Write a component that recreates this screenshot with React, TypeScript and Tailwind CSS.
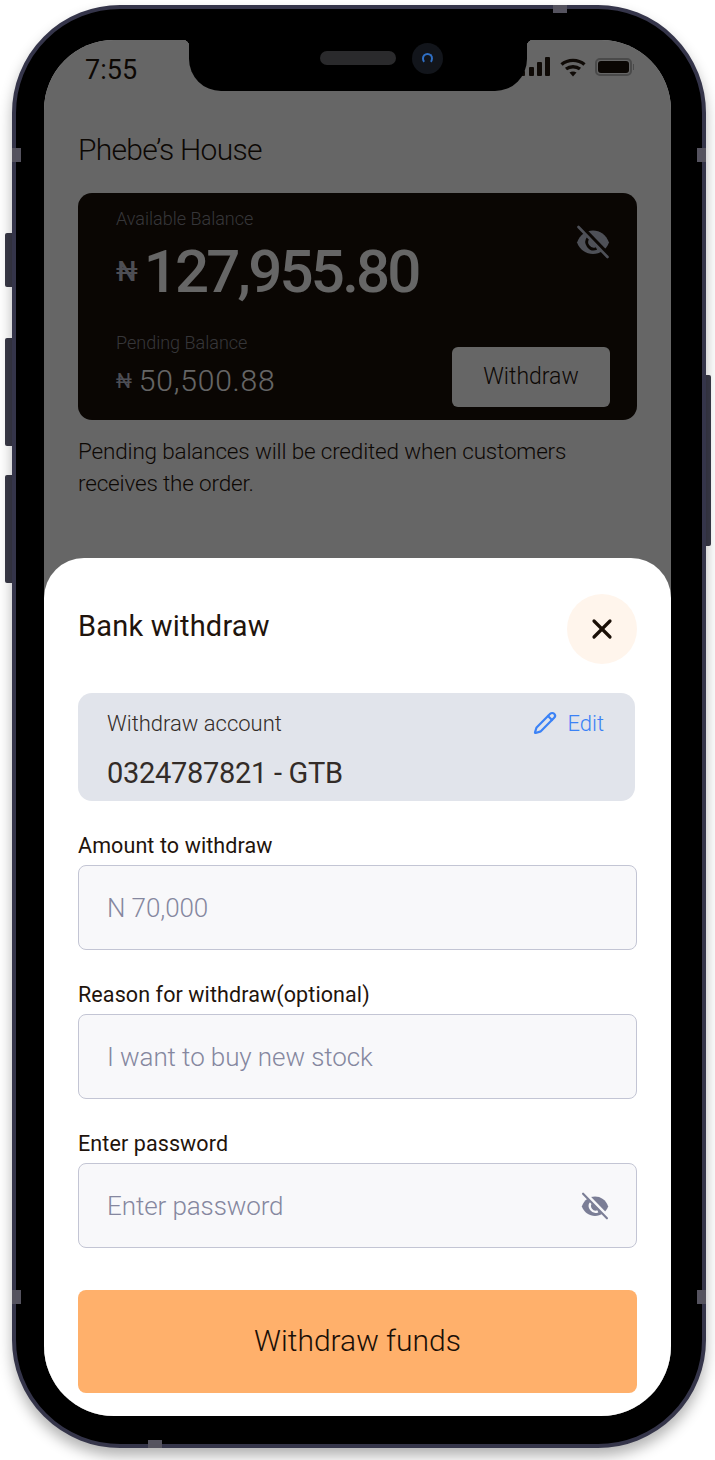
import { Pencil, X } from "lucide-react";

const EyeOff = ({ className = "", cut }: { className?: string; cut: string }) => (
  <svg viewBox="0 0 34 34" className={className} fill="none">
    <path d="M1 17.500C4 9.500 10 5.500 17 5.500s13 4 16 12C30 25 24 29 17 29S4 25 1 17.500Z" fill="currentColor" />
    <path d="M12.500 12.500a7 7 0 0 0 8 11" stroke={cut} strokeWidth="2.800" />
    <path d="M5 2l27 28" stroke={cut} strokeWidth="5" />
    <path d="M2.500 2l29 30" stroke="currentColor" strokeWidth="2.600" strokeLinecap="round" />
  </svg>
);

const Signal = () => (
  <svg viewBox="0 0 30 20" className="w-[30px] h-[20px] fill-current">
    <rect x="0" y="14" width="4" height="5" rx="1" />
    <rect x="8" y="10" width="5" height="9" rx="1" />
    <rect x="16" y="5" width="5" height="14" rx="1" />
    <rect x="24" y="0" width="5" height="19" rx="1" />
  </svg>
);

const Wifi = () => (
  <svg viewBox="0 0 26 19" className="w-[26px] h-[19px]" fill="none" stroke="currentColor" strokeWidth="3.400">
    <path d="M1.500 6.500C8 1 18 1 24.500 6.500" />
    <path d="M6 11c4-3 10-3 14 0" />
    <path d="M13 18.500l-3.500-4c2-1.200 5-1.200 7 0Z" fill="currentColor" stroke="none" />
  </svg>
);

const Field = ({ label, value, icon }: { label: string; value: string; icon?: boolean }) => (
  <div className="mt-[31px]">
    <div className="h-[26px] pt-[1px] text-[21.500px] leading-[26px] tracking-[0.1px] text-[#1f140c]">{label}</div>
    <div className="mt-[7px] h-[85px] w-[559px] rounded-[8px] border border-[#c3c5d4] bg-[#f8f8fa] pl-[28px] pr-[27px] pt-[1px] flex items-center justify-between text-[26px] tracking-[-0.1px] font-light text-[#85879f]">
      <span>{value}</span>
      {icon && <EyeOff className="w-[28px] h-[28px] text-[#7b7e96]" cut="#f8f8fa" />}
    </div>
  </div>
);

export default function App() {
  return (
    <div className="w-[715px] h-[1460px] bg-white overflow-hidden pt-[5px] pl-[12px] font-['Roboto',sans-serif]">
      <div className="relative w-[694px] h-[1443px]">
        {/* side buttons */}
        <div className="absolute left-[-7px] top-[228px] w-[8px] h-[54px] rounded-l-[2px] bg-[#3a3a48]" />
        <div className="absolute left-[-7px] top-[333px] w-[8px] h-[108px] rounded-l-[2px] bg-[#3a3a48]" />
        <div className="absolute left-[-7px] top-[470px] w-[8px] h-[108px] rounded-l-[2px] bg-[#3a3a48]" />
        <div className="absolute right-[-5px] top-[370px] w-[6px] h-[171px] rounded-r-[2px] bg-[#3a3a48]" />

        <div className="relative w-full h-full rounded-[108px] bg-black border-[4px] border-[#35354a] shadow-[0_8px_14px_rgba(0,0,0,0.3)] pl-[28px] pr-[31px] pt-[31px] pb-[28px]">
          {/* antenna bands */}
          <div className="absolute left-[-4px] top-[139px] w-[9px] h-[14px] bg-[#55535f]" />
          <div className="absolute right-[-4px] top-[139px] w-[9px] h-[14px] bg-[#55535f]" />
          <div className="absolute left-[537px] top-[-4px] w-[14px] h-[8px] bg-[#55535f]" />
          <div className="absolute left-[132px] bottom-[-4px] w-[14px] h-[8px] bg-[#55535f]" />
          <div className="absolute left-[-4px] bottom-[140px] w-[9px] h-[14px] bg-[#55535f]" />
          <div className="absolute right-[-4px] bottom-[140px] w-[9px] h-[14px] bg-[#55535f]" />

          <div className="relative w-full h-full rounded-[70px] bg-white overflow-hidden">
            {/* page behind the sheet */}
            <div className="px-[34px] text-[#1f140c]">
              <div className="h-[56px] flex items-center justify-between -mx-[34px] pl-[41px] pr-[37px]">
                <span className="text-[27px] pt-[5px]">7:55</span>
              </div>
              <h1 className="mt-[36px] h-[36px] text-[30px] leading-[36px] tracking-[-0.7px] font-light">Phebe’s House</h1>
              <div className="mt-[25px] h-[227px] rounded-[14px] bg-[#190f08] pl-[38px] pr-[27px] pt-[14px] pb-[13px] flex justify-between">
                <div>
                  <div className="h-[24px] text-[18px] leading-[24px] font-light text-[#88888f]">Available Balance</div>
                  <div className="mt-[11px] h-[60px] flex items-center text-white">
                    <span className="text-[27px] font-medium text-[#c0c2d2] mr-[6px]">₦</span>
                    <span className="text-[60px] leading-[60px] font-medium tracking-[-2.800px]">127,955.80</span>
                  </div>
                  <div className="mt-[29px] h-[24px] text-[18px] leading-[24px] font-light text-[#88888f]">Pending Balance</div>
                  <div className="mt-[8px] h-[36px] flex items-center text-white">
                    <span className="text-[20px] text-[#c0c2d2] mr-[7px]">₦</span>
                    <span className="text-[30px] leading-[36px] tracking-[0.8px] font-light">50,500.88</span>
                  </div>
                </div>
                <div className="flex flex-col justify-between items-end pt-[18px]">
                  <EyeOff className="w-[34px] h-[34px] text-[#c2c7da]" cut="#190f08" />
                  <button className="w-[158px] h-[60px] rounded-[6px] bg-white pt-[1px] text-[#1f140c] text-[23px] font-light">Withdraw</button>
                </div>
              </div>
              <p className="mt-[15px] w-[540px] text-[22.500px] leading-[32px] tracking-[-0.17px] font-light">
                Pending balances will be credited when customers receives the order.
              </p>
            </div>

            {/* dim layer */}
            <div className="absolute inset-0 bg-black/60" />

            {/* bottom sheet */}
            <div className="absolute left-0 right-0 bottom-0 h-[858px] rounded-t-[40px] bg-white px-[34px] pt-[36px] text-[#1f140c]">
              <div className="flex items-center justify-between h-[70px]">
                <h2 className="text-[29px] tracking-[0.2px] pb-[4px]">Bank withdraw</h2>
                <button className="w-[70px] h-[70px] rounded-full bg-[#fff5ec] flex items-center justify-center">
                  <X className="w-[32px] h-[32px] text-[#1a0f07]" strokeWidth={2.400} />
                </button>
              </div>

              <div className="mt-[29px] h-[108px] w-[557px] rounded-[14px] bg-[#e1e4eb] pl-[29px] pr-[31px] pt-[17px]">
                <div className="flex items-center justify-between h-[26px]">
                  <span className="text-[22px] font-light text-[#332c28]">Withdraw account</span>
                  <span className="flex items-center gap-[10px] text-[22px] font-light text-[#3b82f6]">
                    <Pencil className="w-[24px] h-[24px]" strokeWidth={2.200} />
                    Edit
                  </span>
                </div>
                <div className="mt-[17px] text-[29px] leading-[40px] tracking-[-0.3px] text-[#332c28]">0324787821 - GTB</div>
              </div>

              <Field label="Amount to withdraw" value="N 70,000" />
              <Field label="Reason for withdraw(optional)" value="I want to buy new stock" />
              <Field label="Enter password" value="Enter password" icon />

              <button className="mt-[42px] h-[103px] w-[559px] rounded-[8px] bg-[#ffb06b] pb-[2px] text-[30px] font-light text-[#1a0f07]">
                Withdraw funds
              </button>
            </div>

            {/* status icons */}
            <div className="absolute left-[477px] top-[17px] flex items-center gap-[9px] text-[#0f0a06]">
              <Signal />
              <Wifi />
              <div className="flex items-center gap-[1px]">
                <div className="w-[37px] h-[18px] rounded-[5px] border-2 border-[#4a4a4a] p-[1px]">
                  <div className="w-full h-full rounded-[3px] bg-[#0a0603]" />
                </div>
                <div className="w-[1px] h-[6px] bg-[#4a4a4a]" />
              </div>
            </div>

            {/* notch */}
            <div className="absolute left-[145px] top-0 w-[338px] h-[51px] rounded-b-[32px] bg-black">
              <div className="absolute left-[-6px] top-0 w-[6px] h-[6px] bg-[radial-gradient(circle_at_0_100%,transparent_6px,black_6.500px)]" />
              <div className="absolute right-[-6px] top-0 w-[6px] h-[6px] bg-[radial-gradient(circle_at_100%_100%,transparent_6px,black_6.500px)]" />
              <div className="absolute left-[131px] top-[11px] w-[76px] h-[14px] rounded-full bg-[#2a2a2c]" />
              <div className="absolute left-[223px] top-[3px] w-[31px] h-[31px] rounded-full bg-[#12151b] flex items-center justify-center">
                <div className="w-[11px] h-[11px] rounded-full border-2 border-[#2f6fc4] border-b-transparent" />
              </div>
            </div>
          </div>
        </div>
      </div>
    </div>
  );
}
